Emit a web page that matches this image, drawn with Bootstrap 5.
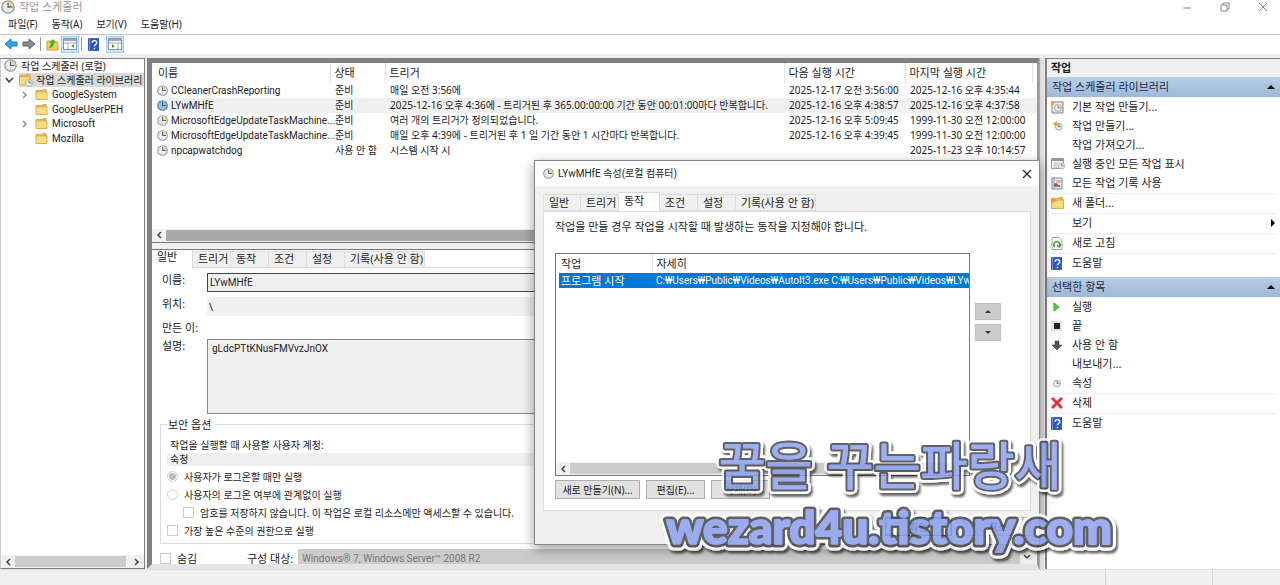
<!DOCTYPE html>
<html lang="ko">
<head>
<meta charset="utf-8">
<meta name="viewport" content="width=device-width, initial-scale=1">
<title>작업 스케줄러</title>
<link href="https://cdn.jsdelivr.net/npm/bootstrap@5.3.0/dist/css/bootstrap.min.css" rel="stylesheet">
<style>
:root{--edge:#808080;--face:#f0f0f0;--line:#dcdcdc}
body{font:11px/14px "Noto Sans","Noto Sans CJK KR",sans-serif;color:#1c1c1c;background:#fff}
.latin{font-family:Roboto,"Noto Sans CJK KR",sans-serif;font-size:10px}
svg{display:block;flex:none}
button,input,textarea{font:inherit;color:inherit;border-radius:0}
a{color:inherit;text-decoration:none}
.app{height:100vh;overflow:hidden}
.titlebar{height:14px;color:#999;padding:0 12px 0 1px}
.titlebar button,.plain{border:0;background:none;padding:0}
.menubar{height:20px;padding:3px 8px 0;gap:14px;font-size:10px}
.toolbar{height:20px;border-top:1px solid #c4c4c4;padding:0 2px;gap:2px}
.tool{width:18px;height:17px;border:0;background:none;padding:0;display:grid;place-items:center}
.tool.on{background:#cce8ff;border:1px solid #99d1ff}
.vr-line{width:1px;height:14px;background:#999}
.work{background:var(--face);padding-top:4px}
.tree{width:145px;background:#fff;border:1px solid var(--edge);border-left-color:#ccc;font-size:10px}
.tree li{height:14px;white-space:nowrap}
.tree .top{gap:4px;padding-left:3px}
.tree .selected{background:#d9d9d9;gap:2px}
.kids{padding-left:18px;margin-top:1px}
.kids li{gap:4px}
.kids li:nth-child(odd){margin-bottom:1px}
.sb{height:13px;background:var(--face)}
.sb .thumb{background:#cdcdcd;height:11px}
.center{margin-left:2px;border:5px solid var(--edge);border-right:2px solid #999;border-bottom-color:#e4e4e4}
.listpane{height:180px;background:#fff;border-bottom:1px solid #777}
.tasks{table-layout:fixed;width:100%;border-collapse:collapse;white-space:nowrap}
.tasks th{font-weight:400;font-size:11px;height:20px;padding:0 6px;border-right:1px solid #e2e2e2}
.tasks td{height:15px;line-height:15px;padding:0 0 0 5px;font-size:10px}
.tasks .hot td{background:#f0f0f0}
.tasks .hot td.name{background:linear-gradient(90deg,#fff 17px,#f0f0f0 17px)}
.tasks .name div{gap:3px}
.split{height:6px;background:var(--face)}
.detail{background:#fff;border-top:1px solid #777;min-height:0;overflow:hidden}
.tabs{background:linear-gradient(#fff 17px,#dcdcdc 17px);height:18px;align-items:flex-end}
.tabs button{height:17px;background:var(--face);border:1px solid var(--line);border-left:0;padding:0 0 0 5px;text-align:left;line-height:14px;white-space:nowrap;width:38px}
.tabs button.long{width:80px}
.tabs button.active{height:19px;background:#fff;border-bottom:0;width:41px;padding-bottom:3px}
.field{display:grid;grid-template-columns:45px 1fr;padding-left:10px}
.field label{white-space:nowrap}
.field input,.field textarea{background:var(--face);border:0;padding:0 2px;display:block;width:100%;outline:0;resize:none}
.field .boxed{height:19px;border:1px solid #444}
.field textarea{height:75px;border:1px solid #888;padding:2px 4px}
.security{margin:4px 15px 0 8px;border:1px solid var(--line);height:126px;padding:0 6px;font-size:10px}
.security legend{font-size:11px;line-height:14px;width:auto;float:none;padding:0 4px 0 1px;margin:0 0 6px}
.security .account{height:13px;line-height:13px;background:var(--face);margin:1px 0 2px}
.security .account,.security .ask{padding-left:3px}
.tick{display:flex;align-items:center;gap:6px;height:18px;margin:0;white-space:nowrap}
.tick input{appearance:none;width:11px;height:11px;margin:0;border:1px solid #ccc;background:#fff;flex:none}
.tick input[type=radio]{border-radius:50%}
.tick input[type=radio]:checked{background:radial-gradient(circle,#bbb 3px,#fff 4px)}
.config{background:#ccc;color:#777;height:20px;border:0;appearance:none;padding:0 4px;border-radius:0}
.gutter{width:6px;background:linear-gradient(90deg,#aaa 1px,#d9d9d9 1px,#e8e8e8)}
.actions{width:235px;background:#fff;border-top:1px solid var(--edge);border-left:2px solid var(--edge)}
.actions h2{font-size:11px;font-weight:600;line-height:17px;height:18px;background:var(--face);padding-left:4px;margin:0}
.actions h3{font-size:11px;font-weight:400;height:20px;line-height:20px;margin:0;padding:0 4px 0 5px;background:linear-gradient(#b9cfe6,#9db9d8);color:#1a2a44}
.actions ul{margin:0;padding-top:1px}
.actions li{margin:0 4px}
.actions li.sep{border-top:1px solid #ececec}
.actions a{display:flex;align-items:center;height:19px}
.actions .ico{width:21px;flex:none}
.statusbar{height:16px;background:var(--face);border-top:1px solid #ddd}
.statusbar span{border-left:1px solid #d4d4d4}
.dialogbox{position:absolute;left:534px;top:160px;width:506px;background:var(--face);border:1px solid #888;box-shadow:0 4px 12px rgba(0,0,0,.4)}
.dialogbox header{height:25px;background:#fff;padding:0 7px 0 8px}
.dialogbox .tabs{background:none;margin-top:7px}
.page{background:#fff;border:1px solid var(--line);height:300px;padding:8px 29px 0 11px}
.acts{width:415px;height:223px;border:1px solid #777;margin-top:19px}
.acts .grid-pad{padding-left:3px}
.acts table{table-layout:fixed;width:100%;white-space:nowrap}
.acts th{font-weight:400;height:19px;padding:0 4px 0 2px;border-right:1px solid #e2e2e2}
.acts th+th{padding-left:4px}
.acts td{background:#0078d7;color:#fff;height:15px;padding:0 0 0 2px;overflow:hidden;line-height:15px}
.acts td+td{padding-left:4px}
.move{width:26px;height:17px;background:#ccc;border:1px solid #bfbfbf;display:grid;place-items:center;padding:0}
.push{height:19px;border:1px solid #adadad;background:#e1e1e1;padding:0;line-height:16px;font-size:10px}
.confirm{padding:6px 0 8px}
.ok{border:1px solid #0078d7;outline:1px solid #9cc8ef;outline-offset:-2px}
.watermark{position:absolute;left:655px;top:430px;pointer-events:none;overflow:visible}
</style>
</head>
<body>
<svg width="0" height="0" class="position-absolute" aria-hidden="true">
<symbol id="clock" viewBox="0 0 16 16"><circle cx="8" cy="8" r="7" fill="#eef1f4" stroke="#94999e" stroke-width="1.600"/><path d="M8 8V2a6 6 0 0 1 6 6z" fill="#f4d67d"/><path d="M8 3v5h5" fill="none" stroke="#5f6974" stroke-width="1.500"/><path d="M3 8h1M8 12v1" stroke="#888"/></symbol>
<symbol id="clockblue" viewBox="0 0 16 16"><circle cx="8" cy="8" r="7" fill="#8fc0e6" stroke="#5382a8" stroke-width="1.600"/><path d="M8 3v5h5" fill="none" stroke="#315d82" stroke-width="1.500"/></symbol>
<symbol id="folder" viewBox="0 0 12 11"><path d="M.5 1.500h6l1-1h3v2h1v8H.5z" fill="#e4b64d" stroke="#d9ae4f"/><path d="M1 3.500h10V10H1z" fill="#f9dc87"/></symbol>
<symbol id="help" viewBox="0 0 12 14"><path d="M0 0h12v14H0z" fill="#3558bd"/><path d="M1 0h1v14H1z" fill="#829ae0"/><path d="M4.500 5c0-3 5-3 5 0 0 2-2.500 2-2.500 4M7 10.500v1.500" fill="none" stroke="#fff" stroke-width="1.500"/></symbol>
<symbol id="pane" viewBox="0 0 14 12"><path d="M.5.5h13v11H.5z" fill="#fff" stroke="#8795a3"/><path d="M1 1h12v2H1z" fill="#9dabb8"/><path d="M1 5h12M5 5v6" stroke="#9caab6"/><path d="M11 6v4L8 8z" fill="#45a52b"/></symbol>
<symbol id="pane2" viewBox="0 0 14 12"><path d="M.5.5h13v11H.5z" fill="#fff" stroke="#8795a3"/><path d="M1 1h12v2H1z" fill="#9dabb8"/><path d="M1 5h12M10 5v6" stroke="#9caab6"/><path d="M4 6v4l3-2z" fill="#45a52b"/></symbol>
<symbol id="left" viewBox="0 0 12 12"><path d="M8 3 5 6l3 3" fill="none" stroke="#444" stroke-width="1.500"/></symbol>
<symbol id="right" viewBox="0 0 12 12"><path d="m4 3 3 3-3 3" fill="none" stroke="#444" stroke-width="1.500"/></symbol>
<symbol id="burst" viewBox="0 0 12 12"><circle cx="7" cy="7" r="4" fill="#eef" stroke="#8a96a2"/><path d="M7 4v3h2" fill="none" stroke="#345"/><path d="m0 1 2 1 2-2 1 2 2 0-2 2 1 2-2-1-2 2V5L0 4l1-1z" fill="#f6a51e"/></symbol>
</svg>
<div class="app d-flex flex-column position-relative">
<header class="titlebar d-flex align-items-center">
<svg width="14" height="14"><use href="#clock"/></svg><span class="ms-1">작업 스케줄러</span>
<div class="ms-auto d-flex gap-4 align-items-center">
<button aria-label="최소화"><svg width="10" height="10"><path d="M1 6h8" stroke="#888"/></svg></button>
<button aria-label="이전 크기로" class="mx-1"><svg width="10" height="10" fill="#fff" stroke="#888"><path d="M3 1h6v6H3z"/><path d="M1 3h6v6H1z"/></svg></button>
<button aria-label="닫기"><svg width="10" height="10"><path d="m1 1 8 8M9 1 1 9" stroke="#888"/></svg></button>
</div>
</header>
<nav class="menubar d-flex"><a href="#">파일(F)</a><a href="#">동작(A)</a><a href="#">보기(V)</a><a href="#">도움말(H)</a></nav>
<div class="toolbar d-flex align-items-center">
<div class="d-flex"><button class="tool" aria-label="뒤로"><svg width="14" height="12"><path d="m1 6 6-5v3h6v4H7v3z" fill="#35a8e8" stroke="#1777b9"/></svg></button>
<button class="tool" aria-label="앞으로"><svg width="14" height="12"><path d="M13 6 7 1v3H1v4h6v3z" fill="#8b8b8b" stroke="#666"/></svg></button></div>
<i class="vr-line"></i>
<div class="d-flex"><button class="tool" aria-label="위로"><svg width="13" height="13"><path d="M1 3h4l1 1h6v8H1z" fill="#f3cd68" stroke="#cda13b"/><path d="m3 10 2-5H3l4-4 3 4H8c0 3-2 5-5 5" fill="#4db32e"/></svg></button>
<button class="tool on" aria-label="콘솔 트리"><svg width="14" height="12"><use href="#pane"/></svg></button></div>
<i class="vr-line"></i>
<div class="d-flex gap-1"><button class="tool" aria-label="도움말"><svg width="11" height="13"><use href="#help"/></svg></button>
<button class="tool on" aria-label="작업 창"><svg width="14" height="12"><use href="#pane2"/></svg></button></div>
</div>
<main class="work d-flex flex-fill overflow-hidden">
<aside class="tree d-flex flex-column overflow-hidden flex-shrink-0">
<ul class="list-unstyled m-0 flex-fill">
<li class="top d-flex align-items-center"><svg width="13" height="13"><use href="#clock"/></svg><span>작업 스케줄러 (로컬)</span></li>
<li class="top d-flex align-items-center"><svg width="11" height="12"><path d="m2 4 3 4 4-4" fill="none" stroke="#333" stroke-width="1.400"/></svg><span class="selected d-flex align-items-center flex-fill"><svg width="15" height="14"><use href="#folder" width="12" height="11" y="1"/><use href="#clock" x="6" y="6" width="8" height="8"/></svg><span>작업 스케줄러 라이브러리</span></span></li>
<li class="h-auto"><ul class="kids list-unstyled latin">
<li class="d-flex align-items-center"><svg width="12" height="12" opacity=".6"><use href="#right"/></svg><svg width="13" height="11"><use href="#folder"/></svg><span>GoogleSystem</span></li>
<li class="d-flex align-items-center"><svg width="12" height="12"></svg><svg width="13" height="11"><use href="#folder"/></svg><span>GoogleUserPEH</span></li>
<li class="d-flex align-items-center"><svg width="12" height="12" opacity=".6"><use href="#right"/></svg><svg width="13" height="11"><use href="#folder"/></svg><span>Microsoft</span></li>
<li class="d-flex align-items-center"><svg width="12" height="12"></svg><svg width="13" height="11"><use href="#folder"/></svg><span>Mozilla</span></li>
</ul></li></ul>
<div class="sb d-flex align-items-center"><svg width="14" height="12"><use href="#left"/></svg><div class="thumb flex-fill"></div><svg class="ms-1" width="14" height="12"><use href="#right"/></svg></div>
</aside>
<section class="center d-flex flex-column flex-fill overflow-hidden">
<div class="listpane d-flex flex-column flex-shrink-0">
<table class="tasks">
<colgroup><col style="width:178px"><col style="width:55px"><col><col style="width:121px"><col style="width:127px"><col style="width:5px"></colgroup>
<thead><tr><th>이름</th><th class="ps-1">상태</th><th class="ps-1">트리거</th><th class="ps-1">다음 실행 시간</th><th class="ps-1">마지막 실행 시간</th><th class="p-0 border-0"></th></tr></thead>
<tbody>
<tr><td class="name"><div class="d-flex align-items-center latin"><svg width="11" height="11"><use href="#clock"/></svg><span>CCleanerCrashReporting</span></div></td><td>준비</td><td>매일 오전 3:56에</td><td>2025-12-17 오전 3:56:00</td><td>2025-12-16 오후 4:35:44</td><td></td></tr>
<tr class="hot"><td class="name"><div class="d-flex align-items-center latin"><svg width="11" height="11"><use href="#clockblue"/></svg><span>LYwMHfE</span></div></td><td>준비</td><td>2025-12-16 오후 4:36에 - 트리거된 후 365.00:00:00 기간 동안 00:01:00마다 반복합니다.</td><td>2025-12-16 오후 4:38:57</td><td>2025-12-16 오후 4:37:58</td><td></td></tr>
<tr><td class="name"><div class="d-flex align-items-center latin"><svg width="11" height="11"><use href="#clock"/></svg><span>MicrosoftEdgeUpdateTaskMachine...</span></div></td><td>준비</td><td>여러 개의 트리거가 정의되었습니다.</td><td>2025-12-16 오후 5:09:45</td><td>1999-11-30 오전 12:00:00</td><td></td></tr>
<tr><td class="name"><div class="d-flex align-items-center latin"><svg width="11" height="11"><use href="#clock"/></svg><span>MicrosoftEdgeUpdateTaskMachine...</span></div></td><td>준비</td><td>매일 오후 4:39에 - 트리거된 후 1 일 기간 동안 1 시간마다 반복합니다.</td><td>2025-12-16 오후 4:39:45</td><td>1999-11-30 오전 12:00:00</td><td></td></tr>
<tr><td class="name"><div class="d-flex align-items-center latin"><svg width="11" height="11"><use href="#clock"/></svg><span>npcapwatchdog</span></div></td><td>사용 안 함</td><td>시스템 시작 시</td><td></td><td>2025-11-23 오후 10:14:57</td><td></td></tr>
</tbody></table>
<div class="sb d-flex align-items-center mt-auto"><svg width="14" height="12"><use href="#left"/></svg><div class="thumb flex-fill" style="background:#a9a9a9"></div></div>
</div>
<div class="split flex-shrink-0"></div>
<div class="detail flex-fill d-flex">
<div class="flex-fill">
<div class="tabs d-flex"><button class="active">일반</button><button>트리거</button><button>동작</button><button>조건</button><button>설정</button><button class="long">기록(사용 안 함)</button></div>
<div class="field" style="padding-top:5px"><label for="nm">이름:</label><input id="nm" class="boxed latin" value="LYwMHfE" readonly></div>
<div class="field" style="padding-top:5px"><label for="loc">위치:</label><input id="loc" style="height:19px" value="\" readonly></div>
<div class="field" style="padding-top:5px"><span>만든 이:</span></div>
<div class="field" style="padding-top:4px"><label for="ds">설명:</label><textarea id="ds" class="latin" readonly>gLdcPTtKNusFMVvzJnOX</textarea></div>
<fieldset class="security"><legend>보안 옵션</legend>
<div class="ask">작업을 실행할 때 사용할 사용자 계정:</div>
<div class="account">숙청</div>
<label class="tick"><input type="radio" name="logon" checked disabled>사용자가 로그온할 때만 실행</label>
<label class="tick"><input type="radio" name="logon" disabled>사용자의 로그온 여부에 관계없이 실행</label>
<label class="tick ms-3"><input type="checkbox" disabled>암호를 저장하지 않습니다. 이 작업은 로컬 리소스에만 액세스할 수 있습니다.</label>
<label class="tick"><input type="checkbox" disabled>가장 높은 수준의 권한으로 실행</label>
</fieldset>
<div class="d-flex align-items-center" style="padding:5px 0 0 8px"><label class="tick" style="width:87px"><input type="checkbox" disabled>숨김</label><label for="cfg" style="width:51px">구성 대상:</label><select id="cfg" class="config latin flex-fill" disabled><option>Windows® 7, Windows Server™ 2008 R2</option></select></div>
</div>
<div class="d-flex align-items-end" style="width:17px;background:#f0f0f0"><svg width="14" height="14"><path d="m4 5 3 3 3-3" fill="none" stroke="#444" stroke-width="1.500"/></svg></div>
</div>
</section>
<div class="gutter flex-shrink-0"></div>
<aside class="actions flex-shrink-0">
<h2>작업</h2>
<h3 class="d-flex align-items-center">작업 스케줄러 라이브러리<svg class="ms-auto" width="9" height="6"><path d="M0 5h8L4 1z"/></svg></h3>
<ul class="list-unstyled">
<li><a href="#"><span class="ico"><svg width="13" height="13"><path d="M1 1h11v11H1z" fill="#eee" stroke="#887b70"/><use href="#clock" x="3" y="3" width="8" height="8"/><path d="M0 0h4L3 3 0 5z" fill="#f5a31c"/></svg></span>기본 작업 만들기...</a></li>
<li><a href="#"><span class="ico"><svg width="12" height="10"><use href="#burst" x="2" width="10" height="10"/></svg></span>작업 만들기...</a></li>
<li><a href="#"><span class="ico"></span>작업 가져오기...</a></li>
<li><a href="#"><span class="ico"><svg width="14" height="12"><path d="M.5.5h12v10H.5z" fill="#fff" stroke="#8f9da9"/><path d="M1 1h11v2H1z" fill="#8796a4"/><path d="M2 5h6M2 7h5M2 9h4" stroke="#aab3bc"/><use href="#clock" x="7" y="4" width="7" height="8"/></svg></span>실행 중인 모든 작업 표시</a></li>
<li><a href="#"><span class="ico"><svg width="12" height="13"><path d="M1 1h10v11H1z" fill="#e5eef8" stroke="#7589a0"/><path d="M3 1v11M5 4h5" stroke="#7c9abd"/><circle cx="5" cy="8" r="2" fill="#d33c32"/><path d="M6 6 8 3l2 3z" fill="#f0b416"/><path d="M7 8h2v2H7z" fill="#416db5"/></svg></span>모든 작업 기록 사용</a></li>
<li class="sep"><a href="#"><span class="ico"><svg width="13" height="12"><use href="#folder"/><path d="m0 1 2 1 2-2 0 3 2 1-3 1-1 2-1-3z" fill="#f39c18"/></svg></span>새 폴더...</a></li>
<li class="sep"><a href="#"><span class="ico"></span>보기<svg class="ms-auto" width="6" height="8"><path d="M1 0v8l4-4z"/></svg></a></li>
<li class="sep"><a href="#"><span class="ico"><svg width="12" height="13"><path d="M1 .5h7l3 3v9H1z" fill="#f9fff8" stroke="#9baaa0"/><path d="M4 10a3 3 0 1 1 4.500-1M10 7l-1.500 3L6 8.500" fill="none" stroke="#37a936" stroke-width="1.500"/></svg></span>새로 고침</a></li>
<li class="sep"><a href="#"><span class="ico"><svg width="11" height="13"><use href="#help"/></svg></span>도움말</a></li>
</ul>
<h3 class="d-flex align-items-center mt-1">선택한 항목<svg class="ms-auto" width="9" height="6"><path d="M0 5h8L4 1z"/></svg></h3>
<ul class="list-unstyled">
<li><a href="#"><span class="ico"><svg width="12" height="10"><path d="M3 1v8l5-4z" fill="#65cf43" stroke="#389d2b"/></svg></span>실행</a></li>
<li><a href="#"><span class="ico"><svg width="12" height="10"><path d="M0 0h11v10H0z" fill="#e4e4e4"/><path d="M3 2h6v6H3z" fill="#222"/></svg></span>끝</a></li>
<li><a href="#"><span class="ico"><svg width="12" height="11"><path d="M4 1h4v4h3l-5 5-5-5h3z" fill="#555" stroke="#333" stroke-width=".5"/></svg></span>사용 안 함</a></li>
<li><a href="#"><span class="ico"></span>내보내기...</a></li>
<li><a href="#"><span class="ico"><svg width="12" height="9"><use href="#clock" x="2" width="8" height="9"/></svg></span>속성</a></li>
<li class="sep"><a href="#"><span class="ico"><svg width="12" height="12"><path d="m1 1 10 10M11 1 1 11" stroke="#e0383a" stroke-width="3"/></svg></span>삭제</a></li>
<li class="sep"><a href="#"><span class="ico"><svg width="11" height="13"><use href="#help"/></svg></span>도움말</a></li>
</ul>
</aside>
</main>
<footer class="statusbar d-flex justify-content-end flex-shrink-0"><span style="width:107px"></span><span style="width:68px"></span></footer>

<section class="dialogbox" role="dialog" aria-labelledby="dt">
<header class="d-flex align-items-center"><svg width="11" height="11"><use href="#clock"/></svg><span id="dt" class="ms-1 latin">LYwMHfE 속성(로컬 컴퓨터)</span><button class="plain ms-auto" aria-label="닫기"><svg width="10" height="10"><path d="m1 1 8 8M9 1 1 9" stroke="#222" stroke-width="1.200"/></svg></button></header>
<div class="px-2">
<div class="tabs d-flex"><button class="border-start">일반</button><button>트리거</button><button class="active">동작</button><button>조건</button><button>설정</button><button class="long">기록(사용 안 함)</button></div>
<div class="page">
<div>작업을 만들 경우 작업을 시작할 때 발생하는 동작을 지정해야 합니다.</div>
<div class="d-flex">
<div class="acts d-flex flex-column flex-shrink-0"><div class="grid-pad"><table><colgroup><col style="width:93px"><col></colgroup><thead><tr><th>작업</th><th class="border-0">자세히</th></tr></thead><tbody><tr><td>프로그램 시작</td><td class="latin">C:₩Users₩Public₩Videos₩AutoIt3.exe C:₩Users₩Public₩Videos₩LYwMHfE</td></tr></tbody></table></div>
<div class="sb d-flex align-items-center mt-auto"><svg width="14" height="12"><use href="#left"/></svg><div class="thumb flex-fill"></div><svg width="14" height="12"><use href="#right"/></svg></div></div>
<div class="d-flex flex-column gap-1" style="padding:69px 0 0 5px"><button class="move" aria-label="위로 이동"><svg width="6" height="4"><path d="M0 3h6L3 0z" fill="#333"/></svg></button><button class="move" aria-label="아래로 이동"><svg width="6" height="4"><path d="M0 0h6L3 3z" fill="#333"/></svg></button></div>
</div>
<div class="d-flex pt-1" style="gap:6px"><button class="push" style="width:85px">새로 만들기(N)...</button><button class="push" style="width:59px">편집(E)...</button><button class="push" style="width:59px">삭제(D)</button></div>
</div>
<div class="confirm d-flex justify-content-end" style="gap:12px"><button class="push ok" style="width:67px">확인</button><button class="push" style="width:67px">취소</button></div>
</div>
</section>
<svg class="watermark" width="470" height="130" aria-label="꿈을 꾸는파랑새 wezard4u.tistory.com">
<defs><filter id="drop" x="-5%" y="-20%" width="110%" height="150%"><feDropShadow dx="2" dy="3" stdDeviation="1" flood-opacity=".7"/></filter></defs>
<g text-anchor="middle" stroke-linejoin="round" filter="url(#drop)" opacity=".84" paint-order="stroke" fill="#8b9ff0">
<g font-family="Noto Sans CJK KR,sans-serif" font-weight="400" font-size="51"><text x="235" y="55" stroke="#fff" stroke-width="10">꿈을 꾸는파랑새</text><text x="235" y="55" stroke="#444" stroke-width="5" aria-hidden="true">꿈을 꾸는파랑새</text><text x="235" y="55" stroke="#8b9ff0" stroke-width="1" aria-hidden="true">꿈을 꾸는파랑새</text></g>
<g font-family="Lato,sans-serif" font-weight="900" font-size="46"><text x="234" y="114" stroke="#fff" stroke-width="13">wezard4u.tistory.com</text><text x="234" y="114" stroke="#444" stroke-width="7" aria-hidden="true">wezard4u.tistory.com</text><text x="234" y="114" stroke="#8b9ff0" stroke-width="2" aria-hidden="true">wezard4u.tistory.com</text></g>
</g></svg>
</div>
<script src="https://cdn.jsdelivr.net/npm/bootstrap@5.3.0/dist/js/bootstrap.bundle.min.js"></script>
</body>
</html>
